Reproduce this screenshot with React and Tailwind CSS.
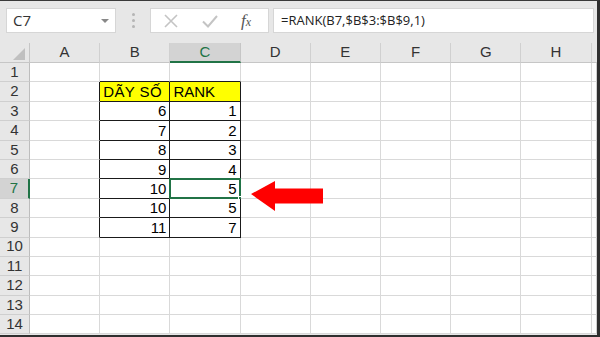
import React from 'react';

const columns = ['A', 'B', 'C', 'D', 'E', 'F', 'G', 'H'];

const data = {
  2: { B: 'DÃY SỐ', C: 'RANK' },
  3: { B: 6, C: 1 },
  4: { B: 7, C: 2 },
  5: { B: 8, C: 3 },
  6: { B: 9, C: 4 },
  7: { B: 10, C: 5 },
  8: { B: 10, C: 5 },
  9: { B: 11, C: 7 },
};

const inTable = (row, col) => row >= 2 && row <= 9 && (col === 'B' || col === 'C');

const Cell = ({ row, col }) => {
  const value = data[row]?.[col];
  const isHeaderRow = row === 2 && inTable(row, col);
  const selected = row === 7 && col === 'C';

  // right border black when this cell or its right neighbour belongs to the table
  const nextCol = columns[columns.indexOf(col) + 1];
  const blackRight = inTable(row, col) || (nextCol && inTable(row, nextCol));
  const blackBottom = inTable(row, col) || inTable(row + 1, col);

  return (
    <div
      className={`relative border-r border-b flex items-center px-[3px] text-[15px] leading-none text-black ${
        blackRight ? 'border-r-[#1a1a1a]' : 'border-r-[#d9d9d9]'
      } ${blackBottom ? 'border-b-[#1a1a1a]' : 'border-b-[#d9d9d9]'} ${
        isHeaderRow ? 'bg-[#ffff00] justify-start' : 'bg-white justify-end'
      } ${row === 2 && col === 'B' ? 'tracking-[0.4px]' : ''}`}
    >
      {value}
      {selected && (
        <div className="absolute -left-[1px] -top-[1px] -right-[1px] -bottom-[1px] border-2 border-[#217346]">
          <div className="absolute -right-[4px] -bottom-[4px] w-[5px] h-[5px] bg-[#217346] border border-white" />
        </div>
      )}
    </div>
  );
};

const App = () => {
  const rows = Array.from({ length: 14 }, (_, i) => i + 1);

  return (
    <div className="w-[600px] h-[337px] overflow-hidden bg-[#e7e7e7] border-t border-t-[#3a3a3a] border-r-[3px] border-r-[#2f2f2f] border-b-2 border-b-[#2f2f2f] font-['Liberation_Sans',Arial,sans-serif] relative">
      {/* formula bar */}
      <div className="h-[42px] flex items-start pt-[7px] pl-[6px]">
        <div className="w-[110px] h-[25px] bg-white border border-[#d6d6d6] flex items-center justify-between pl-[6px] pr-[6px]">
          <span className="font-['Open_Sans',sans-serif] text-[15px] text-[#333]">C7</span>
          <span className="w-0 h-0 border-l-[4px] border-r-[4px] border-t-[4px] border-l-transparent border-r-transparent border-t-[#888]" />
        </div>
        <div className="w-[34px] h-[25px] flex flex-col items-center justify-center gap-[3px]">
          <span className="w-[3px] h-[3px] rounded-full bg-[#b5b5b5]" />
          <span className="w-[3px] h-[3px] rounded-full bg-[#b5b5b5]" />
          <span className="w-[3px] h-[3px] rounded-full bg-[#b5b5b5]" />
        </div>
        <div className="w-[119px] h-[25px] bg-white border border-[#d6d6d6] flex items-center">
          <svg width="16" height="16" viewBox="0 0 16 16" className="ml-[12px]">
            <path d="M2 2 L14 14 M14 2 L2 14" stroke="#c4c4c4" strokeWidth="1.6" fill="none" />
          </svg>
          <svg width="18" height="16" viewBox="0 0 18 16" className="ml-[22px]">
            <path d="M2 8.5 L7 13.5 L16 3" stroke="#c4c4c4" strokeWidth="2" fill="none" />
          </svg>
          <span className="ml-[22px] font-['Liberation_Serif',serif] italic text-[17px] text-[#555] leading-none">
            f<span className="text-[12px]">x</span>
          </span>
        </div>
        <div className="ml-[4px] w-[321px] h-[25px] bg-white border border-[#d6d6d6] flex items-center pl-[7px]">
          <span className="font-['Open_Sans',sans-serif] text-[13px] text-[#222]">=RANK(B7,$B$3:$B$9,1)</span>
        </div>
      </div>

      {/* sheet */}
      <div className="grid grid-cols-[30px_repeat(8,70.2px)_1fr] grid-rows-[20px_repeat(14,19.4px)] bg-white">
        <div className="bg-[#e7e7e7] border-r border-b border-[#c6c6c6] flex items-end justify-end pr-[4px] pb-[2px]">
          <svg width="12" height="12" viewBox="0 0 12 12">
            <polygon points="12,0 12,12 0,12" fill="#c0c0c0" />
          </svg>
        </div>
        {columns.map((c) => (
          <div
            key={c}
            className={`flex items-center justify-center text-[15px] border-r ${
              c === 'C'
                ? 'bg-[#d3d3d3] text-[#217346] border-b-2 border-b-[#217346] border-r-[#c6c6c6]'
                : 'bg-[#e7e7e7] text-[#333] border-b border-b-[#c6c6c6] border-r-[#d0d0d0]'
            }`}
          >
            {c}
          </div>
        ))}
        <div className="bg-[#e7e7e7] border-b border-[#c6c6c6]" />

        {rows.map((r) => (
          <React.Fragment key={r}>
            <div
              className={`flex items-center justify-center text-[15px] border-b border-b-[#cfcfcf] ${
                r === 7
                  ? 'bg-[#d3d3d3] text-[#217346] border-r-2 border-r-[#217346]'
                  : 'bg-[#e7e7e7] text-[#333] border-r border-r-[#bdbdbd]'
              }`}
            >
              {r}
            </div>
            {columns.map((c) => (
              <Cell key={c} row={r} col={c} />
            ))}
            <div className="bg-white border-b border-b-[#d9d9d9] border-r border-r-[#d0d0d0]" />
          </React.Fragment>
        ))}
      </div>

      {/* red arrow pointing at C7 */}
      <svg className="absolute left-[250px] top-[179px]" width="74" height="32" viewBox="0 0 74 32">
        <polygon points="1,14 25,1 25,8.5 73,8.5 73,23.5 25,23.5 25,31" fill="#ff0000" />
      </svg>
    </div>
  );
};

export default App;
